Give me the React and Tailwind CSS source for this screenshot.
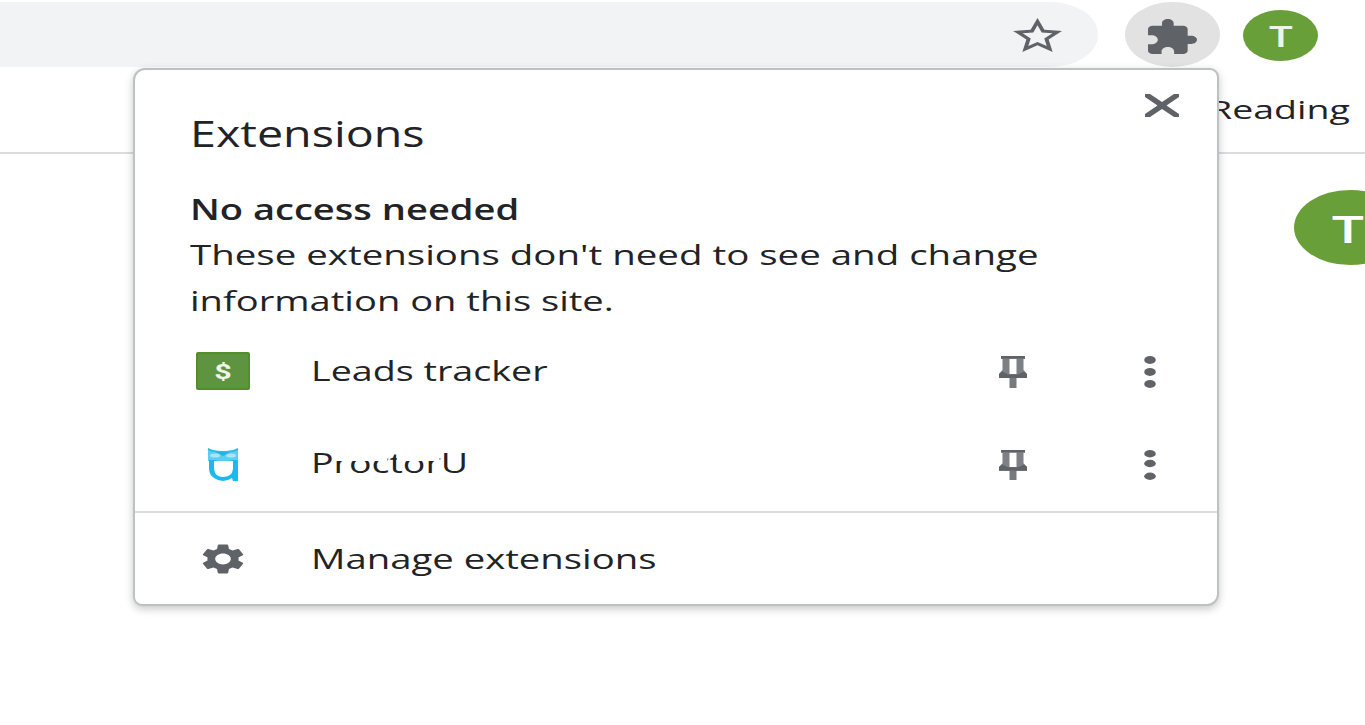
const STRETCH = 'none';

function Star() {
  return (
    <svg className="h-[34px] w-[49px]" viewBox="2 2 20 19" preserveAspectRatio={STRETCH} fill="#5f6368">
      <path d="M22 9.24l-7.19-.62L12 2 9.19 8.63 2 9.24l5.46 4.73L5.82 21 12 17.27 18.18 21l-1.63-7.03L22 9.24zM12 15.4l-3.76 2.27 1-4.28-3.32-2.88 4.38-.38L12 6.1l1.71 4.04 4.38.38-3.32 2.88 1 4.28L12 15.4z" />
    </svg>
  );
}

function Puzzle() {
  return (
    <svg className="h-[35px] w-[49px]" viewBox="2 1 21 21" preserveAspectRatio={STRETCH} fill="#5f6368">
      <path d="M20.5 11H19V7c0-1.1-.9-2-2-2h-4V3.5C13 2.12 11.88 1 10.5 1S8 2.12 8 3.5V5H4c-1.1 0-1.99.9-1.99 2v3.8H3.5c1.49 0 2.7 1.21 2.7 2.7s-1.21 2.7-2.7 2.7H2V20c0 1.1.9 2 2 2h3.8v-1.5c0-1.49 1.21-2.7 2.7-2.7 1.49 0 2.7 1.21 2.7 2.7V22H17c1.1 0 2-.9 2-2v-4h1.5c1.38 0 2.5-1.12 2.5-2.5S21.88 11 20.5 11z" />
    </svg>
  );
}

function Close() {
  return (
    <svg className="h-[23px] w-[36px]" viewBox="0 0 36 23">
      <path d="M1 0H6L18 8L30 0H35V3L22.500 11.500L35 20V23H30L18 15L6 23H1V20L13.500 11.500L1 3Z" fill="#5f6368" />
    </svg>
  );
}

function Pin({ short }) {
  return (
    <svg className={short ? 'h-[30px] w-7' : 'h-8 w-7'} viewBox="0 0 28 32" preserveAspectRatio={STRETCH}>
      <path d="M2 0H26V3H24.500V14L28 18V22H0V18L3.500 14V3H2ZM10.500 3V18H17.500V3Z" fill="#7d8185" fillRule="evenodd" />
      <path d="M10.500 22H17.500V32H10.500Z" fill="#777a7f" />
      <path d="M2 0H26V2.500H2ZM3 15.500L9 18.500H19L25 15.500L28 18V22H0V18Z" fill="#5f6368" />
    </svg>
  );
}

function Dots({ short }) {
  return (
    <svg className={short ? 'h-[30px] w-3' : 'h-8 w-3'} viewBox="0 0 12 32" preserveAspectRatio={STRETCH} fill="#5f6368">
      <ellipse cx="6" cy="4" rx="5.8" ry="3.9" />
      <ellipse cx="6" cy={short ? 14.4 : 16} rx="5.8" ry="3.9" />
      <ellipse cx="6" cy="28" rx="5.8" ry="3.9" />
    </svg>
  );
}

function Gear() {
  return (
    <svg className="h-[30px] w-[42px]" viewBox="2.3 2 19.4 20" preserveAspectRatio={STRETCH} fill="#5f6368">
      <path d="M19.14 12.94c.04-.3.06-.61.06-.94 0-.32-.02-.64-.07-.94l2.03-1.58c.18-.14.23-.41.12-.61l-1.92-3.32c-.12-.22-.37-.29-.59-.22l-2.39.96c-.5-.38-1.03-.7-1.62-.94l-.36-2.54c-.04-.24-.24-.41-.48-.41h-3.84c-.24 0-.43.17-.47.41l-.36 2.54c-.59.24-1.13.57-1.62.94l-2.39-.96c-.22-.08-.47 0-.59.22L2.74 8.87c-.12.21-.08.47.12.61l2.03 1.58c-.05.3-.09.63-.09.94s.02.64.07.94l-2.03 1.58c-.18.14-.23.41-.12.61l1.92 3.32c.12.22.37.29.59.22l2.39-.96c.5.38 1.03.7 1.62.94l.36 2.54c.05.24.24.41.48.41h3.84c.24 0 .44-.17.47-.41l.36-2.54c.59-.24 1.13-.56 1.62-.94l2.39.96c.22.08.47 0 .59-.22l1.92-3.32c.12-.22.07-.47-.12-.61l-2.01-1.58zM12 15.600c-1.980 0-3.600-1.620-3.600-3.600s1.620-3.600 3.600-3.600 3.600 1.620 3.600 3.600-1.620 3.600-3.600 3.600z" />
    </svg>
  );
}

function Owl() {
  return (
    <svg className="h-[33px] w-[32px]" viewBox="0 0 32 33">
      <path d="M1 0Q5 3 16 3Q27 3 31 0V13H1Z" fill="#5dcdf2" />
      <path d="M1 1Q6 4 16 4Q26 4 31 1" fill="none" stroke="#2bbcec" strokeWidth="2" />
      <path d="M9 4L16 8L23 4Z" fill="#1db5ea" />
      <ellipse cx="8" cy="7.500" rx="5" ry="2" fill="#a5e6fa" />
      <ellipse cx="24" cy="7.500" rx="5" ry="2" fill="#a5e6fa" />
      <path d="M2 12H31V33H26L25 30Q16 36 7 30Q2 27 2 20ZM7 13V21Q8 29 16 29Q25 29 26 21V13Q16 11 7 13Z" fill="#1db8ed" fillRule="evenodd" />
    </svg>
  );
}

function Row({ icon, label, short }) {
  return (
    <div className="flex h-[93px] items-center">
      <div className="flex w-[176px] justify-center">{icon}</div>
      <div className="w-[688px] pb-1 text-[28px]">{label}</div>
      <div className="flex w-7"><Pin short={short} /></div>
      <div className="ml-[117px] flex w-3"><Dots short={short} /></div>
    </div>
  );
}

export default function App() {
  return (
    <div className="relative h-[725px] w-[1365px] overflow-hidden bg-white font-['Open_Sans','Noto_Sans',sans-serif] text-[#222326]">
      <header className="flex h-[68px] items-start pt-[2px]">
        <div className="flex h-[65px] w-[1098px] items-center justify-end rounded-r-[48px_32px] bg-[#f1f3f4] pr-9">
          <Star />
        </div>
        <div className="ml-[27px] flex h-[65px] w-[95px] items-center justify-center rounded-[50%] bg-[#e2e2e2] pt-[3px]">
          <Puzzle />
        </div>
        <div className="ml-[23px] mt-2 flex h-[51px] w-[75px] items-center justify-center rounded-[50%] bg-[#689f38] text-[28px] font-semibold text-[#eef5e8]">
          <span className="scale-x-150">T</span>
        </div>
      </header>
      <div className="flex h-[86px] justify-end border-b-2 border-[#dadce0]">
        <div className="w-[156px] pt-[23px] text-[25px] leading-[36px]">
          <span className="inline-block origin-left scale-x-[1.5] whitespace-nowrap">Reading</span>
        </div>
      </div>
      <main className="flex justify-end pt-9">
        <div className="-mr-[41px] flex h-[75px] w-[112px] items-center justify-center rounded-[50%] bg-[#689f38] pr-1 pt-0.5 text-[38px] font-semibold text-white">
          <span className="scale-x-150">T</span>
        </div>
      </main>

      <section className="absolute left-[133px] top-[68px] flex h-[538px] w-[1086px] flex-col rounded-[12px_9px] border-2 border-[#bdc1c0] bg-white shadow-[0_3px_9px_rgba(0,0,0,0.22)]">
        <div className="flex h-[112px] justify-between pl-[55px] pr-[37px]">
          <h1 className="pt-[38px] text-[37px] font-normal leading-[50px]">
            <span className="inline-block origin-left scale-x-[1.26] whitespace-nowrap">Extensions</span>
          </h1>
          <div className="pt-6"><Close /></div>
        </div>
        <div className="h-[143px] pl-[55px] pt-1 text-[28px] leading-[46px]">
          <h2 className="h-[45px] font-semibold"><span className="inline-block origin-left scale-x-[1.36] whitespace-nowrap">No access needed</span></h2>
          <p className="flex flex-col items-start">
            <span className="inline-block origin-left scale-x-[1.373] whitespace-nowrap">These extensions don't need to see and change</span>
            <span className="inline-block origin-left scale-x-[1.361] whitespace-nowrap">information on this site.</span>
          </p>
        </div>
        <Row
          icon={<div className="mb-[2px] flex h-[38px] w-[54px] items-center justify-center rounded-[2px] border-2 border-[#528f2c] bg-[#5e9440] pt-1 font-['Roboto',sans-serif] text-[21px] font-bold text-[#eef5e8]"><span className="scale-x-[1.45]">$</span></div>}
          label={<span className="inline-block origin-left scale-x-[1.345] whitespace-nowrap">Leads tracker</span>}
        />
        <Row
          short
          icon={<Owl />}
          label={
            <span className="relative -top-px inline-block origin-left scale-x-[1.34] whitespace-nowrap">
              ProctorU
              <span className="absolute left-[17px] top-[15px] h-[5px] w-[40px] bg-white" />
              <span className="absolute left-[64px] top-[15px] h-[5px] w-[32px] bg-white" />
            </span>
          }
        />
        <div className="flex flex-1 items-center border-t-2 border-[#dadce0] text-[28px]">
          <div className="flex w-[176px] justify-center"><Gear /></div>
          <span className="inline-block origin-left scale-x-[1.367] whitespace-nowrap pb-[2px]">Manage extensions</span>
        </div>
      </section>
    </div>
  );
}
